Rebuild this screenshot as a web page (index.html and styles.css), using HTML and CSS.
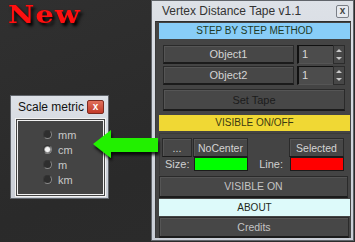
FILE: index.html
```html
<!DOCTYPE html>
<html>
  <head>
    <link rel="stylesheet" href="styles.css">
    <title>Vertex Distance Tape</title>
    <meta charset="UTF-8">
  </head>
  <body>
    <div class="new-label">New</div>

    <div class="win scale-win">
      <div class="win-title">
        <span>Scale metric</span>
        <span class="close-red">x</span>
      </div>
      <div class="metric-box">
        <label class="radio"><span class="dot"></span>mm</label>
        <label class="radio"><span class="dot on"></span>cm</label>
        <label class="radio"><span class="dot"></span>m</label>
        <label class="radio"><span class="dot"></span>km</label>
      </div>
    </div>

    <div class="win tape-win">
      <div class="win-title">
        <span>Vertex Distance Tape v1.1</span>
        <span class="close-gray">x</span>
      </div>
      <div class="panel">
        <div class="bar bar-blue">STEP BY STEP METHOD</div>
        <div class="steps">
          <div class="obj-row">
            <div class="btn obj">Object1</div>
            <div class="spinner"><span class="spin-val">1</span><span class="spin-arrows"><i class="up"></i><i class="down"></i></span></div>
          </div>
          <div class="obj-row">
            <div class="btn obj">Object2</div>
            <div class="spinner"><span class="spin-val">1</span><span class="spin-arrows"><i class="up"></i><i class="down"></i></span></div>
          </div>
          <div class="btn set-tape">Set Tape</div>
        </div>
        <div class="bar bar-yellow">VISIBLE ON/OFF</div>
        <div class="vis-group">
          <div class="btn small">...</div>
          <div class="btn small">NoCenter</div>
          <div></div>
          <div class="btn small">Selected</div>
          <div class="lbl">Size:</div>
          <div class="swatch green"></div>
          <div class="lbl right">Line:</div>
          <div class="swatch red"></div>
        </div>
        <div class="btn wide vis-on">VISIBLE ON</div>
        <div class="bar bar-cyan">ABOUT</div>
        <div class="btn wide credits">Credits</div>
      </div>
    </div>

    <svg class="arrow" width="72" height="40" viewBox="0 0 72 40">
      <defs>
        <filter id="sh" x="-20%" y="-30%" width="150%" height="170%">
          <feDropShadow dx="1" dy="3" stdDeviation="1.5" flood-color="#000" flood-opacity="0.8"/>
        </filter>
      </defs>
      <polygon filter="url(#sh)" fill="#22f000" points="3,16 21,2 21,10 68,10 68,24 21,24 21,30"/>
    </svg>
  </body>
</html>
```

FILE: styles.css
```css
body {
  margin: 0;
  width: 355px;
  height: 242px;
  overflow: hidden;
  position: relative;
  background: linear-gradient(160deg, #303030 0%, #2a2a2a 60%, #2c2c2c 100%);
  font-family: "Liberation Sans", Arial, sans-serif;
}

.new-label {
  position: absolute;
  left: 8px;
  top: 0;
  font-family: "DejaVu Serif", serif;
  font-weight: bold;
  font-size: 24px;
  letter-spacing: 1px;
  color: #ff1010;
  transform: scaleX(1.2);
  transform-origin: left top;
  text-shadow: 0 0 1px #600, 2px 3px 3px #000;
}

/* windows */
.win {
  position: absolute;
  box-sizing: border-box;
  border: 1px solid #60646a;
  background: linear-gradient(#dde1e7, #c9ced6);
}
.win-title {
  display: flex;
  align-items: center;
  justify-content: space-between;
  height: 20px;
  padding: 0 2px 0 7px;
  font-size: 12px;
  color: #333;
}

.tape-win {
  left: 151px;
  top: 0;
  width: 203px;
  height: 241px;
  padding: 0 2px 2px 3px;
}
.close-gray {
  width: 11px;
  height: 11px;
  margin-top: 1px;
  border: 1px solid #7a7e86;
  border-radius: 2px;
  background: #e6e9ee;
  color: #444;
  font-size: 10px;
  font-weight: bold;
  line-height: 10px;
  text-align: center;
}

.scale-win {
  left: 10px;
  top: 95px;
  width: 99px;
  height: 104px;
  padding: 0 2px 1px 4px;
}
.scale-win .win-title {
  height: 22px;
  padding: 0 2px 0 3px;
  color: #111;
}
.close-red {
  width: 15px;
  height: 12px;
  border: 1px solid #7c2a20;
  border-radius: 2px;
  background: linear-gradient(#e0705c, #c23a28);
  color: #fff;
  font-size: 10px;
  font-weight: bold;
  line-height: 11px;
  text-align: center;
}

.metric-box {
  box-sizing: border-box;
  height: 79px;
  border: 3px double #f2f2f2;
  background: #444;
  display: flex;
  flex-direction: column;
  padding: 7px 0 0 25px;
  gap: 2px;
}
.radio {
  display: flex;
  align-items: center;
  gap: 6px;
  height: 13px;
  font-size: 11px;
  color: #c8c8c8;
}
.dot {
  width: 7px;
  height: 7px;
  border-radius: 50%;
  border: 1px solid #8a8a8a;
  border-top-color: #333;
  border-left-color: #3a3a3a;
  background: #2e2e2e;
}
.dot.on {
  background: radial-gradient(circle, #f4f4f4 0 2px, #9a9a9a 3px, #3a3a3a 4px);
}

/* main panel */
.panel {
  box-sizing: border-box;
  height: 217px;
  border-top: 1px solid #2e2e2e;
  border-left: 1px solid #3a3a3a;
  background: #444;
  padding: 1px 1px 0 3px;
  display: flex;
  flex-direction: column;
}
.bar {
  height: 16px;
  line-height: 16px;
  text-align: center;
  font-size: 10px;
}
.bar-blue {
  background: #88cdf8;
  color: #1d3a26;
}
.bar-yellow {
  background: #f0d834;
  color: #3b3a12;
  margin-top: 4px;
}
.bar-cyan {
  background: #ddfafa;
  color: #1e2a1c;
  height: 17px;
  line-height: 17px;
  margin-top: 1px;
}

.btn {
  box-sizing: border-box;
  background: #474747;
  border: 1px solid #2a2a2a;
  border-bottom: 2px solid #1b1b1b;
  box-shadow: inset 1px 1px 0 #555;
  color: #d4d4d4;
  font-size: 11px;
  text-align: center;
  display: flex;
  align-items: center;
  justify-content: center;
}

.steps {
  display: flex;
  flex-direction: column;
  gap: 2px;
  padding: 6px 5px 0 4px;
}
.obj-row {
  display: flex;
  gap: 3px;
  height: 19px;
}
.obj {
  width: 131px;
}
.spinner {
  flex: 1;
  display: flex;
}
.spin-val {
  flex: 1;
  box-sizing: border-box;
  border-top: 1px solid #111;
  border-left: 2px solid #111;
  border-bottom: 1px solid #555;
  background: #4c4c4c;
  color: #d8d8d8;
  font-size: 11px;
  padding-left: 3px;
  line-height: 17px;
}
.spin-arrows {
  width: 12px;
  display: flex;
  flex-direction: column;
  background: #474747;
  border: 1px solid #2c2c2c;
  box-sizing: border-box;
}
.spin-arrows i {
  flex: 1;
  display: flex;
  align-items: center;
  justify-content: center;
}
.spin-arrows i::before {
  content: "";
  border-left: 3px solid transparent;
  border-right: 3px solid transparent;
}
.spin-arrows .up::before {
  border-bottom: 3px solid #c8c8c8;
}
.spin-arrows .down::before {
  border-top: 3px solid #c8c8c8;
}
.set-tape {
  height: 22px;
  margin-top: 2px;
  color: #1c1c1c;
}

.vis-group {
  display: grid;
  grid-template-columns: 30px 55px 1fr 55px;
  grid-template-rows: 19px 14px;
  column-gap: 1px;
  margin-top: 2px;
  padding: 4px 6px 4px 2px;
  border-top: 1px solid #3a3a3a;
  border-left: 1px solid #3a3a3a;
}
.small {
  font-size: 10.5px;
  border-bottom-width: 1px;
}
.lbl {
  color: #d0d0d0;
  font-size: 11px;
  line-height: 14px;
  padding-left: 3px;
}
.lbl.right {
  text-align: right;
  padding-right: 5px;
}
.swatch {
  border: 1px solid #1c1c1c;
  margin-left: 1px;
}
.green {
  background: #00ff00;
}
.red {
  background: #ff0000;
}

.wide {
  font-size: 10.5px;
  color: #c4c4c4;
}
.vis-on {
  height: 23px;
  margin: 1px 2px 0 0;
}
.credits {
  height: 22px;
  margin: 1px 1px 0 0;
}

.arrow {
  position: absolute;
  left: 90px;
  top: 128px;
}
```
